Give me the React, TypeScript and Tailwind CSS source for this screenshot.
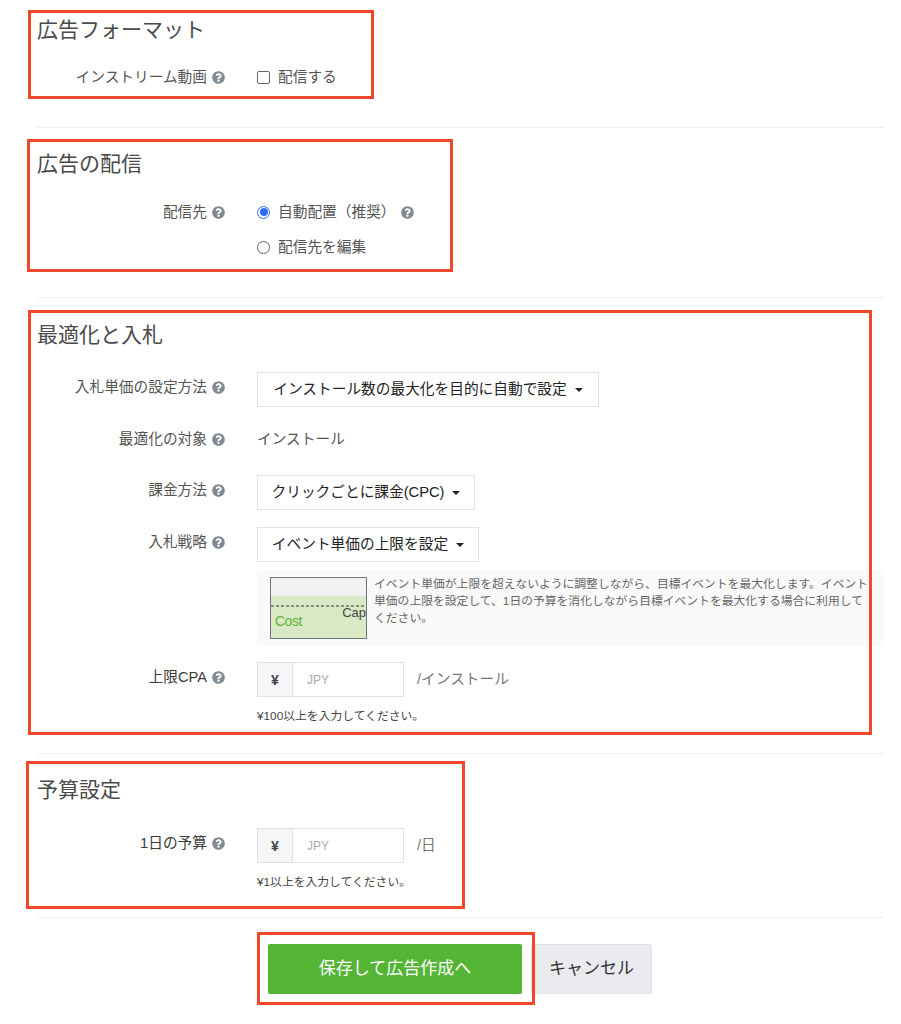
import { FaQuestionCircle } from "react-icons/fa";

const Help = () => (
  <FaQuestionCircle className="ml-[5px] h-[13px] w-[13px] shrink-0 text-[#7f8a93]" />
);

const Caret = () => (
  <span className="ml-2 inline-block h-0 w-0 border-x-[4px] border-t-[4px] border-x-transparent border-t-[#222]" />
);

type RowProps = {
  label: string;
  className: string;
  tall?: boolean;
  dark?: boolean;
  children: React.ReactNode;
};

const Row = ({ label, className, tall, dark, children }: RowProps) => (
  <div className={`flex ${className}`}>
    <div
      className={`flex w-[188px] items-center justify-end text-[14.7px] ${tall ? "h-[31px]" : "h-[20px]"} ${dark ? "text-[#3c3c3c]" : "text-[#555]"}`}
    >
      {label}
      <Help />
    </div>
    <div className="ml-8 flex-1">{children}</div>
  </div>
);

const Select = ({ label, width }: { label: string; width: string }) => (
  <div className={`flex h-[35px] items-center justify-center border border-[#dfe1e5] bg-white text-[14.7px] text-[#222] ${width}`}>
    {label}
    <Caret />
  </div>
);

const YenInput = ({ unit }: { unit: string }) => (
  <div className="flex items-center">
    <div className="flex h-[35px] w-[147px] border border-[#dfe1e5] bg-white">
      <div className="flex w-[35px] items-center justify-center border-r border-[#dfe1e5] bg-[#f5f6f8] text-sm font-bold text-[#444]">¥</div>
      <div className="flex flex-1 items-center pl-[14px] text-xs text-[#aaa]">JPY</div>
    </div>
    <span className="ml-[13px] text-[14.7px] text-[#777]">{unit}</span>
  </div>
);

const Heading = ({ children }: { children: React.ReactNode }) => (
  <h2 className="h-[28px] text-[21px] leading-[28px] text-[#4a4a4a]">{children}</h2>
);

const CapChart = () => (
  <svg width="97" height="62" viewBox="0 0 97 62" className="shrink-0">
    <rect x="0.5" y="0.5" width="96" height="61" fill="#f0f1f3" stroke="#6f7478" />
    <rect x="1" y="19" width="95" height="42" fill="#d9e8c5" />
    <line x1="1" y1="29" x2="96" y2="29" stroke="#333" strokeDasharray="3 2" />
    <text x="96" y="40" textAnchor="end" fontSize="13" fill="#444" fontFamily="Liberation Sans">Cap</text>
    <text x="5" y="49" fontSize="14" fill="#5cb531" fontFamily="Liberation Sans" letterSpacing="-0.5">Cost</text>
  </svg>
);

// annotation frames drawn over the form
const frames = [
  "left-[28px] top-[10px] h-[89px] w-[346px]",
  "left-[27px] top-[139px] h-[133px] w-[426px]",
  "left-[28px] top-[310px] h-[425px] w-[844px]",
  "left-[26px] top-[761px] h-[148px] w-[439px]",
  "left-[257px] top-[932px] h-[73px] w-[278px]",
];

export default function App() {
  return (
    <div className="relative h-[1024px] w-[901px] overflow-hidden bg-white font-['Liberation_Sans','Noto_Sans_CJK_JP',sans-serif]">
      <div className="ml-[37px] w-[847px]">
        <section className="h-[128px] border-b border-[#eeeeee] pt-[16px]">
          <Heading>広告フォーマット</Heading>
          <Row label="インストリーム動画" className="mt-[23px]">
            <label className="flex h-[20px] items-center text-[14.7px] text-[#555]">
              <span className="mr-[8px] h-[13px] w-[13px] rounded-[2px] border border-[#666] bg-white" />
              配信する
            </label>
          </Row>
        </section>

        <section className="h-[170px] border-b border-[#eeeeee] pt-[22px]">
          <Heading>広告の配信</Heading>
          <Row label="配信先" className="mt-[24px]">
            <div className="flex h-[20px] items-center text-[14.7px] text-[#555]">
              <span className="mr-[8px] flex h-[13px] w-[13px] items-center justify-center rounded-full border border-[#2f6fed] bg-white">
                <span className="h-[8px] w-[8px] rounded-full bg-[#2f6fed]" />
              </span>
              自動配置（推奨）
              <Help />
            </div>
            <div className="mt-[15px] flex h-[20px] items-center text-[14.7px] text-[#555]">
              <span className="mr-[8px] h-[13px] w-[13px] rounded-full border border-[#666] bg-white" />
              配信先を編集
            </div>
          </Row>
        </section>

        <section className="h-[456px] border-b border-[#eeeeee] pt-[23px]">
          <Heading>最適化と入札</Heading>
          <Row label="入札単価の設定方法" tall className="mt-[23px]">
            <Select label="インストール数の最大化を目的に自動で設定" width="w-[342px]" />
          </Row>
          <Row label="最適化の対象" className="mt-[22px]">
            <div className="flex h-[20px] items-center text-[14.7px] text-[#555]">インストール</div>
          </Row>
          <Row label="課金方法" tall className="mt-[26px]">
            <Select label="クリックごとに課金(CPC)" width="w-[218px]" />
          </Row>
          <Row label="入札戦略" tall className="mt-[17px]">
            <Select label="イベント単価の上限を設定" width="w-[222px]" />
            <div className="mt-[8px] flex h-[76px] items-start bg-[#f9f9f9] pt-[7px] pl-[13px]">
              <CapChart />
              <p className="mt-[-1px] ml-[7px] w-[498px] text-[11.8px] leading-[17px] text-[#666]">
                イベント単価が上限を超えないように調整しながら、目標イベントを最大化します。イベント単価の上限を設定して、1日の予算を消化しながら目標イベントを最大化する場合に利用してください。
              </p>
            </div>
          </Row>
          <Row label="上限CPA" tall dark className="mt-[16px]">
            <YenInput unit="/インストール" />
            <p className="mt-[11px] text-[11.8px] text-[#444]">¥100以上を入力してください。</p>
          </Row>
        </section>

        <section className="h-[164px] border-b border-[#eeeeee] pt-[22px]">
          <Heading>予算設定</Heading>
          <Row label="1日の予算" tall dark className="mt-[24px]">
            <YenInput unit="/日" />
            <p className="mt-[11px] text-[11.8px] text-[#444]">¥1以上を入力してください。</p>
          </Row>
        </section>

        <div className="ml-[231px] mt-[26px] flex">
          <button className="h-[50px] w-[254px] rounded-[2px] bg-[#54b535] text-[17px] text-white">保存して広告作成へ</button>
          <button className="ml-[9px] h-[50px] w-[121px] rounded-[2px] border border-[#dfe1e5] bg-[#e9ebee] text-[17px] text-[#333]">キャンセル</button>
        </div>
      </div>

      {frames.map((f) => (
        <div key={f} className={`pointer-events-none absolute border-[3px] border-[#f0472b] ${f}`} />
      ))}
    </div>
  );
}
